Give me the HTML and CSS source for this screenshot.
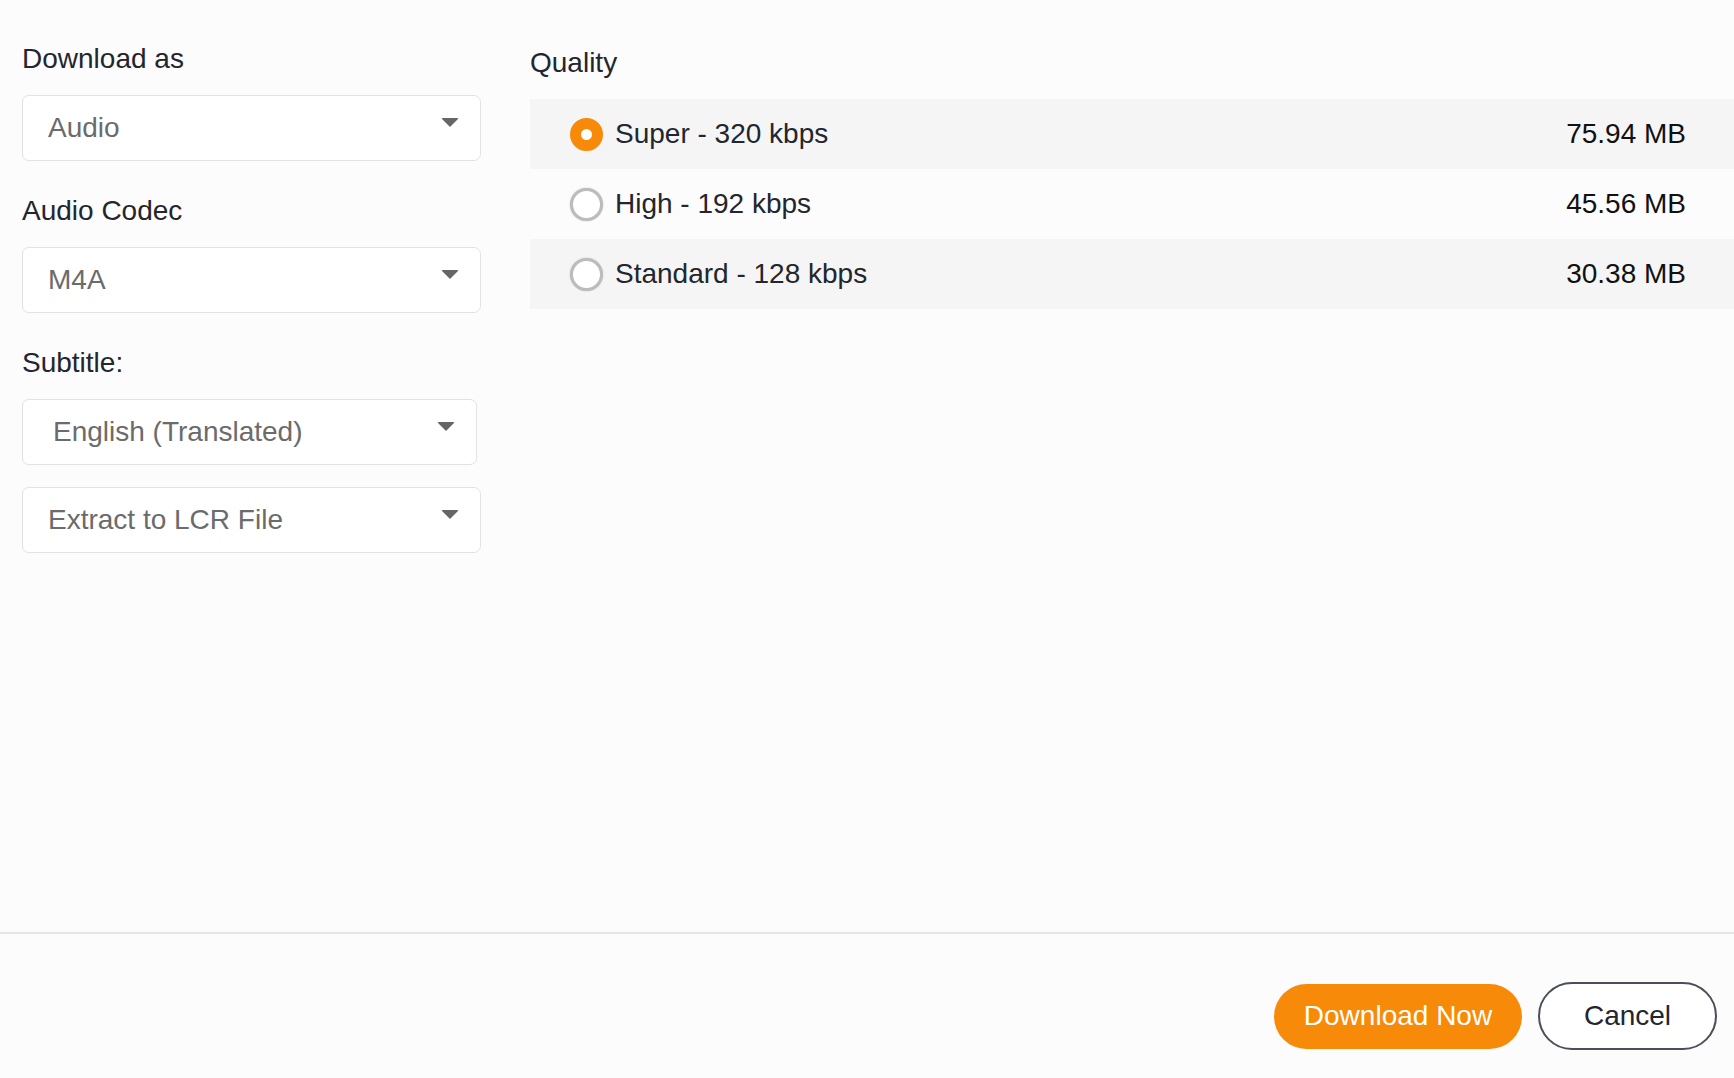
FILE: index.html
```html
<!DOCTYPE html>
<html lang="en">
<head>
    <meta charset="UTF-8">
    <meta name="viewport" content="width=device-width, initial-scale=1.0">
    <title>Download Options</title>
    <link rel="stylesheet" href="styles.css">
</head>
<body>

<div class="main">
    <div class="options">
        <div class="label">Download as</div>
        <div class="dropdown">
            <span class="value">Audio</span>
            <span class="caret"></span>
        </div>

        <div class="label">Audio Codec</div>
        <div class="dropdown">
            <span class="value">M4A</span>
            <span class="caret"></span>
        </div>

        <div class="label">Subtitle:</div>
        <div class="dropdown narrow">
            <span class="value">English (Translated)</span>
            <span class="caret"></span>
        </div>
        <div class="dropdown close">
            <span class="value">Extract to LCR File</span>
            <span class="caret"></span>
        </div>
    </div>

    <div class="quality">
        <div class="label">Quality</div>
        <div class="quality-list">
            <div class="quality-row shaded">
                <span class="radio checked"></span>
                <span class="quality-name">Super - 320 kbps</span>
                <span class="quality-size">75.94 MB</span>
            </div>
            <div class="quality-row">
                <span class="radio"></span>
                <span class="quality-name">High - 192 kbps</span>
                <span class="quality-size">45.56 MB</span>
            </div>
            <div class="quality-row shaded">
                <span class="radio"></span>
                <span class="quality-name">Standard - 128 kbps</span>
                <span class="quality-size">30.38 MB</span>
            </div>
        </div>
    </div>
</div>

<div class="footer">
    <button class="btn primary">Download Now</button>
    <button class="btn outline">Cancel</button>
</div>

</body>
</html>
```

FILE: styles.css
```css
html, body {
    height: 100%;
}

body {
    font-family: "Liberation Sans", Arial, sans-serif;
    font-size: 28px;
    line-height: 32px;
    background-color: #fcfcfc;
    color: #23262d;
    margin: 0;
    padding: 0;
    display: flex;
    flex-direction: column;
}

.main {
    flex: 1;
    display: grid;
    grid-template-columns: 459px 1fr;
    column-gap: 49px;
    padding: 43px 0 0 22px;
}

.label {
    margin-bottom: 20px;
}

.options .dropdown {
    margin-bottom: 34px;
}

.options .dropdown.narrow {
    width: 455px;
    margin-bottom: 22px;
}

.options .dropdown.narrow .value {
    padding-left: 5px;
}

.dropdown {
    box-sizing: border-box;
    height: 66px;
    padding: 0 21px 0 25px;
    display: flex;
    align-items: center;
    background: #fff;
    border: 1.5px solid #e2e2e2;
    border-radius: 7px;
    color: #6b6b6b;
}

.dropdown .value {
    flex: 1;
}

.caret {
    align-self: flex-start;
    margin-top: 22px;
    width: 0;
    height: 0;
    border-left: 9px solid transparent;
    border-right: 9px solid transparent;
    border-top: 9px solid #666;
    border-radius: 2px;
}

.quality .label {
    margin-top: 4px;
    margin-bottom: 20px;
}

.quality-row {
    height: 70px;
    display: flex;
    align-items: center;
    padding: 0 48px 0 40px;
}

.quality-row.shaded {
    background-color: #f5f5f5;
}

.radio {
    box-sizing: border-box;
    width: 33px;
    height: 33px;
    border-radius: 50%;
    border: 3.5px solid #bcbcbc;
    background: #fff;
    box-shadow: 0 0 1.5px #bbb;
    margin-right: 12px;
}

.radio.checked {
    border: 11.5px solid #f88a09;
    box-shadow: none;
}

.quality-name {
    flex: 1;
}

.quality-size {
    color: #111;
}

.footer {
    box-sizing: border-box;
    height: 146px;
    border-top: 2px solid #e6e6e6;
    display: flex;
    justify-content: flex-end;
    align-items: center;
    gap: 16px;
    padding: 20px 17px 0 0;
}

.btn {
    font-family: "Liberation Sans", Arial, sans-serif;
    font-size: 28px;
    line-height: 32px;
    border-radius: 34px;
    cursor: pointer;
}

.btn.primary {
    width: 248px;
    height: 65px;
    background-color: #f88a09;
    color: #fff;
    border: none;
}

.btn.outline {
    width: 179px;
    height: 68px;
    background-color: #fff;
    color: #23262d;
    border: 2px solid #4b4f58;
}
```
